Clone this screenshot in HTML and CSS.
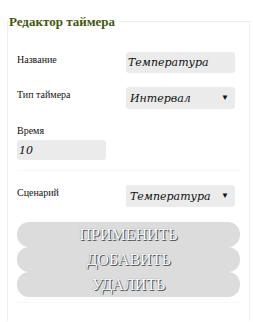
FILE: index.html
```html
<!DOCTYPE html>
<html>
  <head>
    <meta charset="UTF-8">
    <title>Редактор таймера</title>
    <link rel="stylesheet" href="styles.css">
  </head>
  <body>
    <fieldset class="editor">
      <legend>Редактор таймера</legend>
      <div class="row first">
        <label class="caption">Название</label>
        <input class="field" type="text" value="Температура">
      </div>
      <div class="row">
        <label class="caption">Тип таймера</label>
        <div class="picker">
          <select class="field">
            <option selected>Интервал</option>
            <option>Расписание</option>
          </select>
        </div>
      </div>
      <div class="row stack">
        <label class="caption">Время</label>
        <input class="field short" type="text" value="10">
      </div>
      <div class="row">
        <label class="caption">Сценарий</label>
        <div class="picker">
          <select class="field">
            <option selected>Температура</option>
          </select>
        </div>
      </div>
      <div class="buttons">
        <button class="action">ПРИМЕНИТЬ</button>
        <button class="action">ДОБАВИТЬ</button>
        <button class="action">УДАЛИТЬ</button>
      </div>
    </fieldset>
  </body>
</html>
```

FILE: styles.css
```css
body {
  margin: 0;
  background: #fff;
  font-family: "Liberation Serif", serif;
}

/* рамка редактора */
.editor {
  margin: 14px 3px 0 7px;
  padding: 8px 9px 18px 9px;
  border: 1px solid #eeeeee;
  border-bottom: none;
}

.editor legend {
  padding: 0 3px 0 0;
  margin-left: -8px;
  font-size: 13px;
  font-weight: bold;
  color: #45560f;
  line-height: 15px;
}

.row {
  display: flex;
  align-items: flex-start;
  margin-top: 14px;
}

.row.first {
  margin-top: 15px;
}

.row.stack {
  flex-direction: column;
  margin-top: 16px;
  padding-bottom: 10px;
  border-bottom: 1px solid #f7f7f7;
}

.caption {
  width: 109px;
  font-size: 10px;
  line-height: 12px;
  padding-top: 2px;
  color: #111;
}

.stack .caption {
  padding-top: 0;
  margin-bottom: 3px;
}

.field {
  box-sizing: border-box;
  width: 109px;
  height: 21px;
  padding: 0 4px 0 2px;
  border: none;
  border-radius: 3px;
  background: #ebebeb;
  font-family: "DejaVu Serif", serif;
  font-style: italic;
  font-size: 11px;
  color: #111;
  outline: none;
}

.field.short {
  width: 89px;
  height: 20px;
  padding-left: 2px;
}

.picker {
  position: relative;
}

.picker select {
  appearance: none;
  -webkit-appearance: none;
  height: 22px;
  padding-left: 4px;
}

.picker::after {
  content: "▼";
  position: absolute;
  right: 6px;
  top: 6px;
  font-size: 8px;
  color: #111;
  pointer-events: none;
}

.buttons {
  display: flex;
  flex-direction: column;
  margin-top: 15px;
  padding-bottom: 5px;
  border-bottom: 1px solid #f7f7f7;
  width: 223px;
}

.action {
  height: 25px;
  margin: 0;
  border: none;
  border-radius: 12px;
  background: #dcdcdc;
  font-family: "Liberation Serif", serif;
  font-size: 16px;
  color: #fff;
  text-shadow: 1px 1px 0 #555, 0 0 1px #666;
  cursor: pointer;
}
```
